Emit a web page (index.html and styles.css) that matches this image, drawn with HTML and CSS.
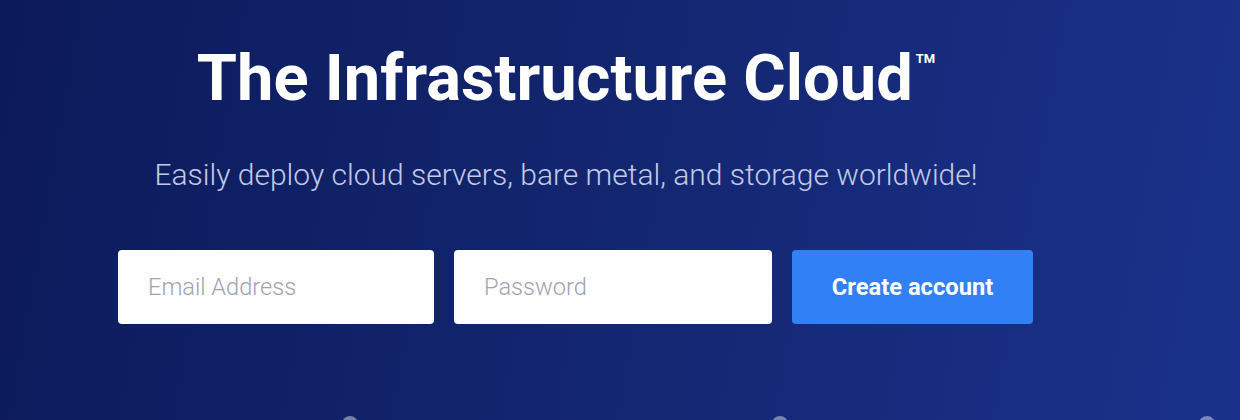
FILE: index.html
```html
<!DOCTYPE html>
<html>
<head>
<meta charset="utf-8">
<link rel="stylesheet" href="styles.css">
</head>
<body>
<main class="hero">
  <div class="inner">
    <h1 class="title">The Infrastructure Cloud<sup class="tm">TM</sup></h1>
    <p class="subtitle">Easily deploy cloud servers, bare metal, and storage worldwide!</p>
    <form class="signup">
      <input class="field" type="email" placeholder="Email Address">
      <input class="field" type="password" placeholder="Password">
      <button class="btn" type="button">Create account</button>
    </form>
  </div>
  <div class="dots">
    <span class="dot d1"></span>
    <span class="dot d2"></span>
    <span class="dot d3"></span>
  </div>
</main>
</body>
</html>
```

FILE: styles.css
```css
html, body {
  margin: 0;
  padding: 0;
  height: 100%;
}
body {
  font-family: Roboto, "Liberation Sans", sans-serif;
  background: #0f1f64;
  overflow: hidden;
}
.hero {
  height: 420px;
  background: linear-gradient(100deg, #0c1a5a 0%, #132670 50%, #1b328c 100%);
  display: flex;
  flex-direction: column;
  overflow: hidden;
}
.inner {
  width: 1132px;
  display: flex;
  flex-direction: column;
  align-items: center;
}
.title {
  margin: 40px 0 0;
  font-size: 65px;
  font-weight: 700;
  color: #fff;
  line-height: 76px;
  letter-spacing: 0;
}
.tm {
  font-size: 13px;
  font-weight: 700;
  line-height: 13px;
  vertical-align: top;
  position: relative;
  top: 12px;
  margin-left: 3px;
}
.subtitle {
  margin: 41px 0 0;
  font-size: 30px;
  font-weight: 300;
  color: #c3cae6;
  line-height: 36px;
}
.signup {
  margin: 57px 0 0 0;
  display: flex;
  gap: 20px;
  align-self: flex-start;
  padding-left: 118px;
}
.field {
  width: 316px;
  height: 74px;
  box-sizing: border-box;
  border: none;
  border-radius: 4px;
  padding: 0 30px;
  font-family: Roboto, "Liberation Sans", sans-serif;
  font-size: 23.6px;
  font-weight: 300;
  background: #fff;
  outline: none;
}
.field:nth-child(2) {
  width: 318px;
}
.field::placeholder {
  color: #9fa2ae;
}
.btn {
  width: 241px;
  height: 74px;
  border: none;
  border-radius: 4px;
  background: #3180f6;
  color: #fff;
  font-family: Roboto, "Liberation Sans", sans-serif;
  font-size: 23.7px;
  font-weight: 700;
}
.dots {
  margin-top: auto;
  display: flex;
  height: 4px;
  padding-left: 342px;
}
.dot {
  width: 16px;
  height: 16px;
  border-radius: 50%;
  background: rgba(200, 205, 225, 0.55);
  display: block;
}
.d2 { margin-left: 414px; }
.d3 { margin-left: 411px; }
```
